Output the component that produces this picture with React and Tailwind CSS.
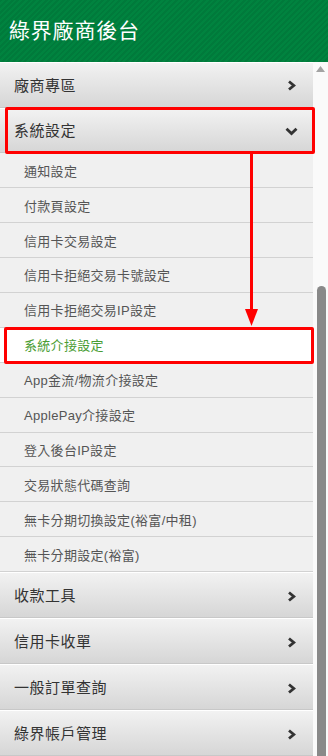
import React from "react";

const font = "font-['Liberation_Sans','Noto_Sans_CJK_TC',sans-serif]";

const subItems = [
  "通知設定",
  "付款頁設定",
  "信用卡交易設定",
  "信用卡拒絕交易卡號設定",
  "信用卡拒絕交易IP設定",
  "系統介接設定",
  "App金流/物流介接設定",
  "ApplePay介接設定",
  "登入後台IP設定",
  "交易狀態代碼查詢",
  "無卡分期切換設定(裕富/中租)",
  "無卡分期設定(裕富)",
];

const bottomItems = ["收款工具", "信用卡收單", "一般訂單查詢", "綠界帳戶管理"];

function ChevronRight() {
  return (
    <svg width="9" height="11" viewBox="0 0 9 11" className="shrink-0">
      <polyline points="2,1.5 6.8,5.5 2,9.5" fill="none" stroke="#333" strokeWidth="2.8" />
    </svg>
  );
}

function ChevronDown() {
  return (
    <svg width="13" height="9" viewBox="0 0 13 9" className="shrink-0">
      <polyline points="1.5,1.8 6.5,6.6 11.5,1.8" fill="none" stroke="#333" strokeWidth="2.8" />
    </svg>
  );
}

function MainItem({ label, open, h = "h-[46px]" }) {
  return (
    <div
      className={`${h} flex items-center justify-between pl-[14px] pr-[15px] pt-[2px] border-t border-white border-b border-b-[#c8c8c8] bg-gradient-to-b from-[#f2f2f2] to-[#d6d6d6]`}
    >
      <span className="text-[15px] text-[#333] tracking-[0.5px]">{label}</span>
      <span className="w-[13px] flex justify-center">{open ? <ChevronDown /> : <ChevronRight />}</span>
    </div>
  );
}

function SubItem({ label, active }) {
  return (
    <div
      className={`h-[35px] flex items-center pl-[24px] pt-[3px] border-b border-[#d2d2d2] ${
        active ? "bg-white text-[#4a9d34]" : "bg-[#f0f0f0] text-[#555]"
      }`}
    >
      <span className="text-[13px] tracking-[0.3px]">{label}</span>
    </div>
  );
}

export default function App() {
  return (
    <div className={`relative w-[328px] h-[756px] overflow-hidden flex flex-col bg-white ${font}`}>
      <header className="h-[62px] shrink-0 flex items-center pl-[9px] bg-[repeating-linear-gradient(135deg,#007a3b_0px,#007a3b_2px,#00833f_2px,#00833f_4px)]">
        <h1 className="text-[21px] text-white tracking-[0.8px] font-normal">綠界廠商後台</h1>
      </header>

      <div className="flex flex-1 min-h-0">
        <nav className="w-[313px] shrink-0 flex flex-col">
          <MainItem label="廠商專區" />
          <MainItem label="系統設定" open h="h-[45px]" />
          {subItems.map((s) => (
            <SubItem key={s} label={s} active={s === "系統介接設定"} />
          ))}
          {bottomItems.map((s) => (
            <MainItem key={s} label={s} />
          ))}
        </nav>

        <div className="w-[15px] shrink-0 bg-[#fafafa] flex flex-col items-center">
          <svg width="9" height="6" viewBox="0 0 9 6" className="mt-[4px]">
            <polygon points="4.5,0 9,6 0,6" fill="#a3a3a3" />
          </svg>
          <div className="flex-1" />
          <div className="w-[9px] h-[470px] rounded-t-[5px] bg-[#898989] ml-[2px]" />
        </div>
      </div>

      {/* annotation overlays */}
      <div className="absolute left-[5px] top-[107px] w-[310px] h-[47px] border-[3px] border-[#ff0000] rounded-[2px]" />
      <div className="absolute left-[4px] top-[327px] w-[310px] h-[37px] border-[3px] border-[#ff0000] rounded-[2px]" />
      <svg className="absolute left-[243px] top-[152px]" width="16" height="176" viewBox="0 0 16 176">
        <rect x="7" y="0" width="3" height="160" fill="#ff0000" />
        <polygon points="2,157 15,157 8.5,174" fill="#ff0000" />
      </svg>
    </div>
  );
}
